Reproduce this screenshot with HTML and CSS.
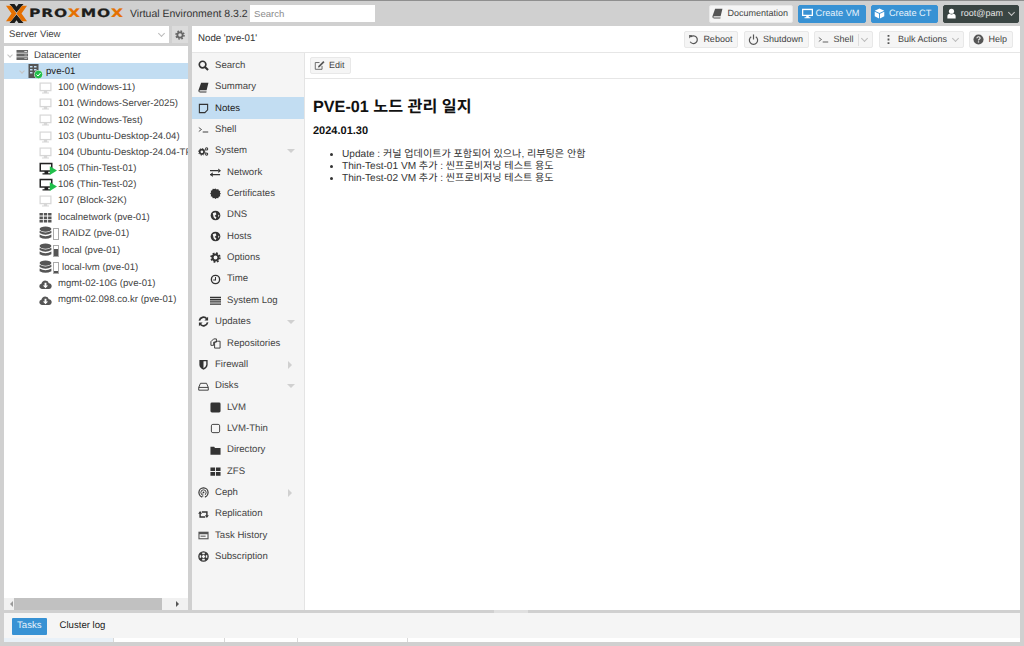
FILE: index.html
```html
<!DOCTYPE html>
<html lang="ko">
<head>
<meta charset="utf-8">
<title>pve-01 - Proxmox Virtual Environment</title>
<link rel="stylesheet" href="styles.css">
</head>
<body>
<svg class="sprite" aria-hidden="true">
  <symbol id="i-search" viewBox="0 0 12 12"><circle cx="5" cy="5" r="3.6" fill="none" stroke="currentColor" stroke-width="1.8"/><path d="M7.6 7.6 11 11" stroke="currentColor" stroke-width="2.2"/></symbol>
  <symbol id="i-book" viewBox="0 0 12 12"><path d="M3 1.5h8L9 9.5H2.2Q1 9.5 1 10.3T2.2 11H9l-.3 1H2Q0 12 0 10.2L.3 9Z" transform="translate(.4 -.6)" fill="currentColor"/></symbol>
  <symbol id="i-note" viewBox="0 0 12 12"><path d="M1.500 1.500h9v6l-3 3h-6Z" fill="none" stroke="currentColor" stroke-width="1.200"/></symbol>
  <symbol id="i-shell" viewBox="0 0 14 12"><path d="M1 3.500l3.500 2.500L1 8.500" fill="none" stroke="currentColor" stroke-width="1"/><path d="M6 9.200h7" stroke="currentColor" stroke-width="1.200"/></symbol>
  <symbol id="i-cogs" viewBox="0 0 13 12"><circle cx="4.600" cy="6.400" r="2.600" fill="none" stroke="currentColor" stroke-width="2"/><circle cx="4.600" cy="6.400" r="4" fill="none" stroke="currentColor" stroke-width="1" stroke-dasharray="1.500 1.600"/><circle cx="10.200" cy="3" r="1.300" fill="none" stroke="currentColor" stroke-width="1.200"/><circle cx="10.200" cy="9" r="1.300" fill="none" stroke="currentColor" stroke-width="1.200"/></symbol>
  <symbol id="i-exchange" viewBox="0 0 12 12"><path d="M0 4h9M0 8.300h11" stroke="currentColor" stroke-width="1.400"/><path d="M9 1.500 12 4 9 6.500ZM3 5.800 0 8.300l3 2.500Z" fill="currentColor"/></symbol>
  <symbol id="i-cert" viewBox="0 0 12 12"><path d="M6 .5l1.300 1.100 1.700-.4.600 1.600 1.600.6-.4 1.700L11.900 6l-1.100 1.300.4 1.700-1.600.6-.6 1.600-1.700-.4L6 11.900l-1.300-1.100-1.700.4-.6-1.600-1.600-.6.4-1.700L.1 6l1.100-1.300-.4-1.700 1.600-.6.6-1.600 1.700.4Z" fill="currentColor"/></symbol>
  <symbol id="i-globe" viewBox="0 0 12 12"><circle cx="6" cy="6" r="5.300" fill="currentColor"/><path d="M3 3.500 6 2.500 7 4.500 5 6.500 7 8 6 10 4 8ZM9 5l1.300 1L9 8Z" fill="#f5f5f5"/></symbol>
  <symbol id="i-gear" viewBox="0 0 12 12"><circle cx="6" cy="6" r="3.200" fill="none" stroke="currentColor" stroke-width="2.200"/><circle cx="6" cy="6" r="4.800" fill="none" stroke="currentColor" stroke-width="1.800" stroke-dasharray="2 1.770"/></symbol>
  <symbol id="i-clock" viewBox="0 0 12 12"><circle cx="6" cy="6" r="4.500" fill="none" stroke="currentColor" stroke-width="1.500"/><path d="M6 3.200V6.500H3.500" fill="none" stroke="currentColor" stroke-width="1.100"/></symbol>
  <symbol id="i-list" viewBox="0 0 12 12"><path d="M0 2h12v1.500H0Zm0 2.400h12v1.500H0Zm0 2.400h12v1.500H0Zm0 2.400h12v1.500H0Z" fill="currentColor"/></symbol>
  <symbol id="i-refresh" viewBox="0 0 12 12"><path d="M1.500 5A4.600 4.600 0 0 1 9.500 3M10.500 7A4.600 4.600 0 0 1 2.500 9" fill="none" stroke="currentColor" stroke-width="1.900"/><path d="M11 .8V5H7ZM1 11.200V7H5Z" fill="currentColor"/></symbol>
  <symbol id="i-files" viewBox="0 0 12 12"><path d="M1 4 4 1h3v3.500H4V8H1ZM5 4.500 8 3.500h3v7.500H5Z" fill="none" stroke="currentColor" stroke-width="1"/></symbol>
  <symbol id="i-shield" viewBox="0 0 12 12"><path d="M1.500 1h9V6q0 3.800-4.500 5.800Q1.500 9.800 1.500 6Z" fill="currentColor"/><path d="M6 2.500h3V6q0 2.300-3 4Z" fill="#f5f5f5"/></symbol>
  <symbol id="i-hdd" viewBox="0 0 12 12"><path d="M.8 7 2.700 2.500h6.600L11.200 7v3H.8Z M.8 7h10.400" fill="none" stroke="currentColor" stroke-width="1"/></symbol>
  <symbol id="i-square" viewBox="0 0 12 12"><rect x=".5" y=".5" width="11" height="11" rx="1.600" fill="currentColor"/></symbol>
  <symbol id="i-square-o" viewBox="0 0 12 12"><rect x="1.500" y="1.500" width="9" height="9" rx="1.600" fill="none" stroke="currentColor"/></symbol>
  <symbol id="i-folder" viewBox="0 0 12 12"><path d="M.5 2h4l1 1.300h6v7.200H.5Z" fill="currentColor"/></symbol>
  <symbol id="i-th" viewBox="0 0 12 12"><path d="M.5 1.500h5v4h-5Zm6 0h5v4h-5Zm-6 5h5v4h-5Zm6 0h5v4h-5Z" fill="currentColor"/></symbol>
  <symbol id="i-grid" viewBox="0 0 13 12"><path d="M.5 1.500h3.400v2.600H.5Zm4.300 0h3.400v2.600H4.800Zm4.300 0h3.400v2.600H9.100ZM.5 4.900h3.400v2.600H.5Zm4.300 0h3.400v2.600H4.800Zm4.300 0h3.400v2.600H9.100ZM.5 8.300h3.400v2.600H.5Zm4.300 0h3.400v2.600H4.800Zm4.300 0h3.400v2.600H9.100Z" fill="currentColor"/></symbol>
  <symbol id="i-ceph" viewBox="0 0 12 12"><circle cx="6" cy="6" r="5" fill="none" stroke="currentColor" stroke-width="1.300"/><circle cx="6" cy="6" r="2.900" fill="none" stroke="currentColor"/><circle cx="6" cy="6" r="1" fill="currentColor"/><path d="M4.500 12h3V7h-3Z" fill="#f5f5f5"/><path d="M5.200 11V7" stroke="currentColor" stroke-width=".8"/></symbol>
  <symbol id="i-retweet" viewBox="0 0 13 12"><path d="M2.500 4.500V9h6M10.500 7.500V3h-6" fill="none" stroke="currentColor" stroke-width="1.700"/><path d="M.2 5h4.600L2.500 2ZM8.200 7h4.600L10.500 10Z" fill="currentColor"/></symbol>
  <symbol id="i-history" viewBox="0 0 13 12"><path d="M.5 1.500h12v9H.5Z" fill="#555"/><path d="M1.800 4.500h9.400v4.700H1.800Z" fill="#f5f5f5"/><path d="M3 6h6v1.800H3Z" fill="#888"/></symbol>
  <symbol id="i-support" viewBox="0 0 12 12"><circle cx="6" cy="6" r="5" fill="none" stroke="currentColor" stroke-width="1.500"/><path d="M2.500 2.500 4.500 4.500M9.500 2.500 7.500 4.500M2.500 9.500 4.500 7.500M9.500 9.500 7.500 7.500" stroke="currentColor" stroke-width="2.400"/><circle cx="6" cy="6" r="2.200" fill="#f5f5f5" stroke="currentColor"/></symbol>
  <symbol id="i-monitor" viewBox="0 0 14 13"><path d="M.5 .5h13v9.500H8.800v1.300h2V12.500h-7.600V11.300h2V10H.5Z" fill="currentColor"/><path d="M1.800 1.800h10.400v6.800H1.800Z" fill="#fff"/></symbol>
  <symbol id="i-monitor-w" viewBox="0 0 14 13"><path d="M.5 1h13v8.500H8.500V11h2v1h-7v-1h2V9.500H.5Z" fill="currentColor"/><path d="M2 2.500h10v5.500H2Z" fill="#3892d4"/></symbol>
  <symbol id="i-cube" viewBox="0 0 12 12"><path d="M6 .5 11.200 3 6 5.500.8 3Z" fill="currentColor"/><path d="M.8 4 5.500 6.400v5.100L.8 9.100ZM11.200 4 6.500 6.400v5.100l4.700-2.400Z" fill="currentColor"/></symbol>
  <symbol id="i-user" viewBox="0 0 12 12"><circle cx="6" cy="3.500" r="2.800" fill="currentColor"/><path d="M1.500 11.500V8.500Q1.500 6.500 3.800 6.200 6 7.800 8.200 6.200 10.500 6.500 10.500 8.500v3Z" fill="currentColor"/></symbol>
  <symbol id="i-undo" viewBox="0 0 12 12"><path d="M3 3.200A4.200 4.200 0 1 1 2.400 8.500" fill="none" stroke="currentColor" stroke-width="1.300"/><path d="M1.200 1.200 4.800 1.400 1.400 5Z" fill="currentColor"/></symbol>
  <symbol id="i-power" viewBox="0 0 12 12"><path d="M3.500 3A4.500 4.500 0 1 0 8.500 3" fill="none" stroke="currentColor" stroke-width="1.300"/><path d="M6 .5v5.500" stroke="currentColor" stroke-width="1.300"/></symbol>
  <symbol id="i-dots" viewBox="0 0 12 12"><path d="M5 1h2v2H5Zm0 4h2v2H5Zm0 4h2v2H5Z" fill="currentColor"/></symbol>
  <symbol id="i-help" viewBox="0 0 12 12"><circle cx="6" cy="6" r="5.500" fill="currentColor"/><path d="M4.200 4.600Q4.400 3 6 3 7.800 3 7.800 4.400 7.800 5.400 6.800 5.800 6 6.200 6 7" fill="none" stroke="#f5f5f5" stroke-width="1.200"/><path d="M5.300 8h1.400v1.300H5.300Z" fill="#f5f5f5"/></symbol>
  <symbol id="i-edit" viewBox="0 0 13 12"><path d="M9.500 6.500V10.500H1.500V2.500H6.500" fill="none" stroke="currentColor"/><path d="M11 .8 12.400 2.200 6.500 8.100 4.700 8.500 5.100 6.700Z" fill="currentColor"/></symbol>
  <symbol id="i-server" viewBox="0 0 14 13"><path d="M.5 1h12.500v3H.5Zm0 4h12.500v3H.5Zm0 4h12.500v3H.5Z" fill="currentColor"/><path d="M9 2.200h3v.7H9Zm0 4h3v.7H9Zm0 4h3v.7H9Z" fill="#fff"/></symbol>
  <symbol id="i-node" viewBox="0 0 11 14"><path d="M.5 0h10v14H.5Z" fill="currentColor"/><path d="M2 2h2.500v1.500H2Zm4 0h2.500v1.500H6ZM2 5h2.500v1.500H2Zm4 0h2.500v1.500H6ZM2 8h2.500v1.500H2Z" fill="#c2ddf2"/></symbol>
  <symbol id="i-ok" viewBox="0 0 9 9"><circle cx="4.500" cy="4.500" r="4.200" fill="#21bf4b" stroke="#fff" stroke-width=".6"/><path d="M2.500 4.500 4 6 6.600 3" fill="none" stroke="#fff"/></symbol>
  <symbol id="i-running" viewBox="0 0 18 14"><path d="M.5 .8h13v9H9.200V11.200h2v1.300H3.500V11.200h2V9.800H.5Z" fill="#222"/><path d="M2 2.300h10v6H2Z" fill="#fff"/><path d="M10.800 4.300 18 8.500 10.800 13Z" fill="#21bf4b"/></symbol>
  <symbol id="i-db" viewBox="0 0 12 14"><ellipse cx="6" cy="2.900" rx="5.500" ry="2.400" fill="currentColor"/><path d="M.5 4.500Q6 7.800 11.500 4.500V6.600Q6 9.600.5 6.600Zm0 3.500Q6 11.200 11.500 8v2.400Q6 13.500.5 10.400Z" fill="currentColor"/></symbol>
  <symbol id="i-cloud" viewBox="0 0 14 12"><path d="M3 10.800Q.3 10.500.3 8 .4 5.700 2.600 5.300 3.300 1.700 6.800 1.600 10 1.800 10.600 4.700 13.700 5.200 13.700 8 13.500 10.700 11 10.800Z" fill="currentColor"/><path d="M6 4h2v3h1.800L7 10 4.200 7H6Z" fill="#fff"/></symbol>
  <symbol id="i-x" viewBox="0 0 21 19"><path d="M3.500 0h5l2 2.700L12.500 0h5l-7 8.500Z" fill="#1d1d1b"/><path d="M3.500 19h5l2-2.700 2 2.700h5l-7-8.500Z" fill="#1d1d1b"/><path d="M0 1.800h5l5.500 7.700L5 17.200H0L5.500 9.500Z" fill="#e57000"/><path d="M21 1.800h-5l-5.500 7.700 5.500 7.700h5L15.500 9.500Z" fill="#e57000"/></symbol>
</svg>

<div class="app">
  <header class="topbar">
    <div class="logo">
      <svg class="logo-x"><use href="#i-x"/></svg>
      <span class="logo-word">PRO<b>X</b>MO<b>X</b></span>
    </div>
    <span class="version">Virtual Environment 8.3.2</span>
    <input class="search" type="text" placeholder="Search">
    <div class="top-actions">
      <button class="btn top-btn"><svg class="ic"><use href="#i-book"/></svg>Documentation</button>
      <button class="btn top-btn primary"><svg class="ic ic-wide"><use href="#i-monitor-w"/></svg>Create VM</button>
      <button class="btn top-btn primary"><svg class="ic"><use href="#i-cube"/></svg>Create CT</button>
      <button class="btn top-btn user"><svg class="ic"><use href="#i-user"/></svg>root@pam<span class="chev light"></span></button>
    </div>
  </header>

  <main class="workspace">
    <aside class="side">
      <div class="view-row">
        <div class="combo">Server View<span class="chev"></span></div>
        <button class="gear"><svg class="ic"><use href="#i-gear"/></svg></button>
      </div>
      <div class="tree-panel">
        <ul class="tree">
          <li class="row root"><span class="chev tree-chev"></span><svg class="tic"><use href="#i-server"/></svg>Datacenter</li>
          <li class="row selected node"><span class="chev tree-chev"></span><span class="node-ic"><svg class="tic"><use href="#i-node"/></svg><svg class="ok"><use href="#i-ok"/></svg></span>pve-01</li>
          <li class="row guest stopped"><svg class="tic"><use href="#i-monitor"/></svg>100 (Windows-11)</li>
          <li class="row guest stopped"><svg class="tic"><use href="#i-monitor"/></svg>101 (Windows-Server-2025)</li>
          <li class="row guest stopped"><svg class="tic"><use href="#i-monitor"/></svg>102 (Windows-Test)</li>
          <li class="row guest stopped"><svg class="tic"><use href="#i-monitor"/></svg>103 (Ubuntu-Desktop-24.04)</li>
          <li class="row guest stopped"><svg class="tic"><use href="#i-monitor"/></svg>104 (Ubuntu-Desktop-24.04-TPL)</li>
          <li class="row guest"><svg class="tic wide"><use href="#i-running"/></svg>105 (Thin-Test-01)</li>
          <li class="row guest"><svg class="tic wide"><use href="#i-running"/></svg>106 (Thin-Test-02)</li>
          <li class="row guest stopped"><svg class="tic"><use href="#i-monitor"/></svg>107 (Block-32K)</li>
          <li class="row guest res"><svg class="tic"><use href="#i-grid"/></svg>localnetwork (pve-01)</li>
          <li class="row guest res tall"><svg class="tic db"><use href="#i-db"/></svg><span class="cap"><i style="height:0%"></i></span>RAIDZ (pve-01)</li>
          <li class="row guest res tall"><svg class="tic db"><use href="#i-db"/></svg><span class="cap"><i style="height:70%"></i></span>local (pve-01)</li>
          <li class="row guest res tall"><svg class="tic db"><use href="#i-db"/></svg><span class="cap"><i style="height:15%"></i></span>local-lvm (pve-01)</li>
          <li class="row guest res"><svg class="tic"><use href="#i-cloud"/></svg>mgmt-02-10G (pve-01)</li>
          <li class="row guest res"><svg class="tic"><use href="#i-cloud"/></svg>mgmt-02.098.co.kr (pve-01)</li>
        </ul>
        <div class="hscroll">
          <span class="sb-arrow left"></span>
          <span class="sb-thumb"></span>
          <span class="sb-arrow right"></span>
        </div>
      </div>
    </aside>

    <section class="panel">
      <div class="panel-head">
        <span class="crumb">Node 'pve-01'</span>
        <div class="head-actions">
          <button class="btn"><svg class="ic"><use href="#i-undo"/></svg>Reboot</button>
          <button class="btn"><svg class="ic"><use href="#i-power"/></svg>Shutdown</button>
          <button class="btn"><svg class="ic"><use href="#i-shell"/></svg>Shell<span class="sep"></span><span class="chev"></span></button>
          <button class="btn bulk"><svg class="ic"><use href="#i-dots"/></svg>Bulk Actions<span class="chev"></span></button>
          <button class="btn"><svg class="ic"><use href="#i-help"/></svg>Help</button>
        </div>
      </div>
      <div class="panel-body">
        <nav class="nav">
          <a class="nav-item"><svg class="nic"><use href="#i-search"/></svg>Search</a>
          <a class="nav-item"><svg class="nic"><use href="#i-book"/></svg>Summary</a>
          <a class="nav-item active"><svg class="nic"><use href="#i-note"/></svg>Notes</a>
          <a class="nav-item"><svg class="nic"><use href="#i-shell"/></svg>Shell</a>
          <a class="nav-item"><svg class="nic"><use href="#i-cogs"/></svg>System<span class="tri down"></span></a>
          <a class="nav-item sub"><svg class="nic"><use href="#i-exchange"/></svg>Network</a>
          <a class="nav-item sub"><svg class="nic"><use href="#i-cert"/></svg>Certificates</a>
          <a class="nav-item sub"><svg class="nic"><use href="#i-globe"/></svg>DNS</a>
          <a class="nav-item sub"><svg class="nic"><use href="#i-globe"/></svg>Hosts</a>
          <a class="nav-item sub"><svg class="nic"><use href="#i-gear"/></svg>Options</a>
          <a class="nav-item sub"><svg class="nic"><use href="#i-clock"/></svg>Time</a>
          <a class="nav-item sub"><svg class="nic"><use href="#i-list"/></svg>System Log</a>
          <a class="nav-item"><svg class="nic"><use href="#i-refresh"/></svg>Updates<span class="tri down"></span></a>
          <a class="nav-item sub"><svg class="nic"><use href="#i-files"/></svg>Repositories</a>
          <a class="nav-item"><svg class="nic"><use href="#i-shield"/></svg>Firewall<span class="tri right"></span></a>
          <a class="nav-item"><svg class="nic"><use href="#i-hdd"/></svg>Disks<span class="tri down"></span></a>
          <a class="nav-item sub"><svg class="nic"><use href="#i-square"/></svg>LVM</a>
          <a class="nav-item sub"><svg class="nic"><use href="#i-square-o"/></svg>LVM-Thin</a>
          <a class="nav-item sub"><svg class="nic"><use href="#i-folder"/></svg>Directory</a>
          <a class="nav-item sub"><svg class="nic"><use href="#i-th"/></svg>ZFS</a>
          <a class="nav-item"><svg class="nic"><use href="#i-ceph"/></svg>Ceph<span class="tri right"></span></a>
          <a class="nav-item"><svg class="nic"><use href="#i-retweet"/></svg>Replication</a>
          <a class="nav-item"><svg class="nic"><use href="#i-history"/></svg>Task History</a>
          <a class="nav-item"><svg class="nic"><use href="#i-support"/></svg>Subscription</a>
        </nav>
        <div class="content">
          <div class="content-bar">
            <button class="btn"><svg class="ic"><use href="#i-edit"/></svg>Edit</button>
          </div>
          <article class="notes">
            <h1>PVE-01 노드 관리 일지</h1>
            <h2>2024.01.30</h2>
            <ul>
              <li>Update : 커널 업데이트가 포함되어 있으나, 리부팅은 안함</li>
              <li>Thin-Test-01 VM 추가 : 씬프로비저닝 테스트 용도</li>
              <li>Thin-Test-02 VM 추가 : 씬프로비저닝 테스트 용도</li>
            </ul>
          </article>
        </div>
      </div>
    </section>
  </main>

  <div class="splitter"><span class="collapse"></span></div>

  <footer class="log">
    <div class="log-tabs">
      <span class="log-tab active">Tasks</span>
      <span class="log-tab">Cluster log</span>
    </div>
    <div class="log-cols">
      <span class="col c1"></span><span class="col c2"></span><span class="col c3"></span><span class="col c4"></span><span class="col c5"></span>
    </div>
  </footer>
</div>
</body>
</html>
```

FILE: styles.css
```css
* { box-sizing: border-box; }
html, body { margin: 0; height: 100%; overflow: hidden; }
body {
  background: #d0d0d0;
  color: #333;
  font: 9.6px/1 "Liberation Sans", "Noto Sans CJK KR", sans-serif;
  text-rendering: geometricPrecision;
}
.sprite { width: 0; height: 0; position: absolute; }
ul { list-style: none; margin: 0; padding: 0; }
svg { flex: none; }

.app { display: flex; flex-direction: column; height: 646px; border-top: 1px solid #8f8f8f; }

/* Top bar */
.topbar { display: flex; align-items: center; height: 25px; padding: 0 5px 0 6px; flex: none; }
.logo { display: flex; align-items: center; width: 124px; }
.logo-x { width: 21px; height: 19px; }
.logo-word {
  display: inline-block;
  margin-left: 2px;
  font: 700 11.5px/1 "DejaVu Sans", sans-serif;
  letter-spacing: .6px;
  color: #1d1d1b;
  transform: scaleX(1.35);
  transform-origin: left center;
  -webkit-text-stroke: .2px #1d1d1b;
}
.logo-word b { color: #e57000; -webkit-text-stroke-color: #e57000; }
.version { width: 120px; padding-top: 1px; font-size: 10.5px; color: #333; }
.search {
  width: 125px; height: 17px; border: 0; padding: 0 4px; background: #fff;
  font: 9.6px "Liberation Sans", sans-serif;
  outline: 0;
}
.search::placeholder { color: #8b8b8b; }
.top-actions { margin-left: auto; display: flex; gap: 4.5px; }

.btn {
  display: inline-flex; align-items: center; height: 17px; padding: 0 5px 0 3px;
  background: #f5f5f5; color: #444; border: 1px solid #e8e8e8; border-radius: 2px;
  font: 9px/1 "Liberation Sans", sans-serif; white-space: nowrap;
  text-rendering: geometricPrecision;
}
.top-btn { height: 18px; padding: 0 4px 0 2px; }
.top-btn.primary { background: #3892d4; border-color: #3892d4; color: #e8f3fb; font-size: 9.2px; padding-right: 6px; }
.top-btn.user { background: #3a4543; border-color: #3a4543; color: #e6e6e6; padding-right: 3px; }
.ic { width: 11px; height: 11px; margin-right: 4px; color: #555; }
.ic-wide { width: 13px; margin-right: 2px; }
.primary .ic, .user .ic { color: #fff; }
.chev {
  display: inline-block; width: 5px; height: 5px; margin: -2px 1px 0 7px;
  border-right: 1px solid #bbb; border-bottom: 1px solid #bbb;
  transform: rotate(45deg);
}
.chev.light { border-color: #c8c8c8; margin-left: 6px; }

/* Workspace */
.workspace { flex: 1; min-height: 0; display: flex; gap: 4px; padding: 0 4px; }
.side { width: 184px; display: flex; flex-direction: column; }
.view-row { display: flex; align-items: center; height: 17px; gap: 3px; margin-bottom: 3px; }
.combo {
  flex: 1; height: 17px; display: flex; align-items: center; justify-content: space-between;
  background: #fff; padding: 0 4px 0 5px; color: #444;
}
.gear { width: 16px; height: 17px; padding: 0; border: 0; background: #dcdcdc; display: flex; align-items: center; justify-content: center; }
.gear .ic { margin: 0; color: #666; width: 10px; height: 10px; }

.tree-panel { flex: 1; min-height: 0; background: #fff; display: flex; flex-direction: column; overflow: hidden; }
.tree { flex: 1; min-height: 0; padding-top: 1px; }
.row { display: flex; align-items: center; height: 16.2px; padding-top: 1px; white-space: nowrap; overflow: hidden; color: #444; }
.row.tall { height: 16.8px; }
.row.selected { background: #c2ddf2; color: #222; }
.tree-chev { width: 4px; height: 4px; margin: -2px 0 0 4px; border-color: #c4c4c4; }
.tic { width: 13px; height: 12px; margin-right: 6px; color: #666; }
.root .tic { margin: -1px 5px 0 4px; }
.node { padding-left: 14px; }
.node .tree-chev { margin-left: 2px; }
.node-ic { position: relative; display: inline-flex; margin: -1px 7px 0 4px; }
.node-ic .tic { margin: 0; width: 11px; height: 14px; color: #555; }
.ok { position: absolute; right: -4px; bottom: -1px; width: 9px; height: 9px; }
.guest { padding-left: 35px; }
.stopped .tic { color: #d6d6d6; }
.tic.wide { width: 18px; height: 14px; margin-right: 1px; }
.res .tic { width: 13px; height: 13px; margin-right: 6px; color: #555; }
.res .tic.db { height: 15px; }
.cap { position: relative; width: 6px; height: 12px; margin: 0 3px 0 -5px; border: 1px solid #aaa; background: #fff; flex: none; }
.cap i { position: absolute; left: 0; right: 0; bottom: 0; background: #555; }

.hscroll { display: flex; align-items: center; height: 12px; flex: none; background: #f1f1f1; }
.sb-arrow { width: 0; height: 0; border: 3px solid transparent; }
.sb-arrow.left { border-right-color: #9a9a9a; margin: 0 1px 0 3px; }
.sb-arrow.right { border-left-color: #555; margin: 0 0 0 14px; }
.sb-thumb { width: 148px; height: 12px; background: #c1c1c1; }

.panel { flex: 1; min-width: 0; display: flex; flex-direction: column; background: #fff; }
.panel-head { flex: none; height: 27px; display: flex; align-items: center; padding: 1px 7px 0 6px; border-bottom: 1px solid #e6e6e6; }
.crumb { font-size: 9.7px; color: #333; margin-top: -1px; }
.head-actions { margin-left: auto; display: flex; gap: 5.5px; }
.head-actions .sep { width: 1px; height: 12px; margin-left: 5px; background: #ddd; }
.head-actions .sep + .chev { margin-left: 3px; margin-right: 0; }
.head-actions .bulk { padding-right: 4px; }
.head-actions .bulk .chev { margin-left: 6px; }
.panel-body { flex: 1; min-height: 0; display: flex; }

.nav { width: 113px; flex: none; background: #f5f5f5; padding-top: 1.5px; border-right: 1px solid #e4e4e4; }
.nav-item { position: relative; display: flex; align-items: center; height: 21.36px; padding: 1px 0 0 6px; color: #444; }
.nav-item.active { background: #c2ddf2; color: #222; }
.nav-item.sub { padding-left: 18px; }
.nic { width: 11px; height: 11px; margin-right: 6px; color: #333; }
.tri { position: absolute; right: 11px; top: 9px; width: 0; height: 0; border: 4px solid transparent; }
.tri.down { border-top: 4px solid #d0d0d0; border-bottom: 0; right: 9px; }
.tri.right { border-left: 4px solid #d0d0d0; border-right: 0; top: 7px; right: 12px; }

.content { flex: 1; min-width: 0; display: flex; flex-direction: column; }
.content-bar { height: 26px; flex: none; display: flex; align-items: center; padding: 0 5px; border-bottom: 1px solid #e6e6e6; }
.notes { padding: 19px 8px; color: #333; }
.notes h1 { margin: 0 0 9px; font-size: 16.2px; line-height: 18px; font-weight: 700; color: #111; }
.notes h2 { margin: 0 0 11px; font-size: 11px; line-height: 13px; font-weight: 700; color: #111; }
.notes ul { list-style: disc; padding-left: 29px; font-size: 10.1px; }
.notes li { line-height: 11.8px; }

.splitter { flex: none; height: 3px; position: relative; }
.collapse { position: absolute; left: 494px; top: 0; width: 34px; height: 3px; background: #e0e0e0; }

.log { flex: none; height: 33px; }
.log-tabs { height: 25px; margin: 0 4px; padding: 1px 0 0 8px; background: #f5f5f5; display: flex; align-items: center; gap: 8px; }
.log-tab { padding: 0 5px; color: #222; height: 17px; display: flex; align-items: center; }
.log-tab.active { background: #3892d4; border-radius: 1px; color: #e8f3fb; }
.log-cols { display: flex; height: 4px; margin: 0 4px; gap: 1px; background: #d8d8d8; }
.col { background: #fff; }
.c1 { width: 109px; background: #e9f1f8; }
.c2 { width: 110px; }
.c3 { width: 72px; }
.c4 { width: 109px; }
.c5 { flex: 1; }
```
